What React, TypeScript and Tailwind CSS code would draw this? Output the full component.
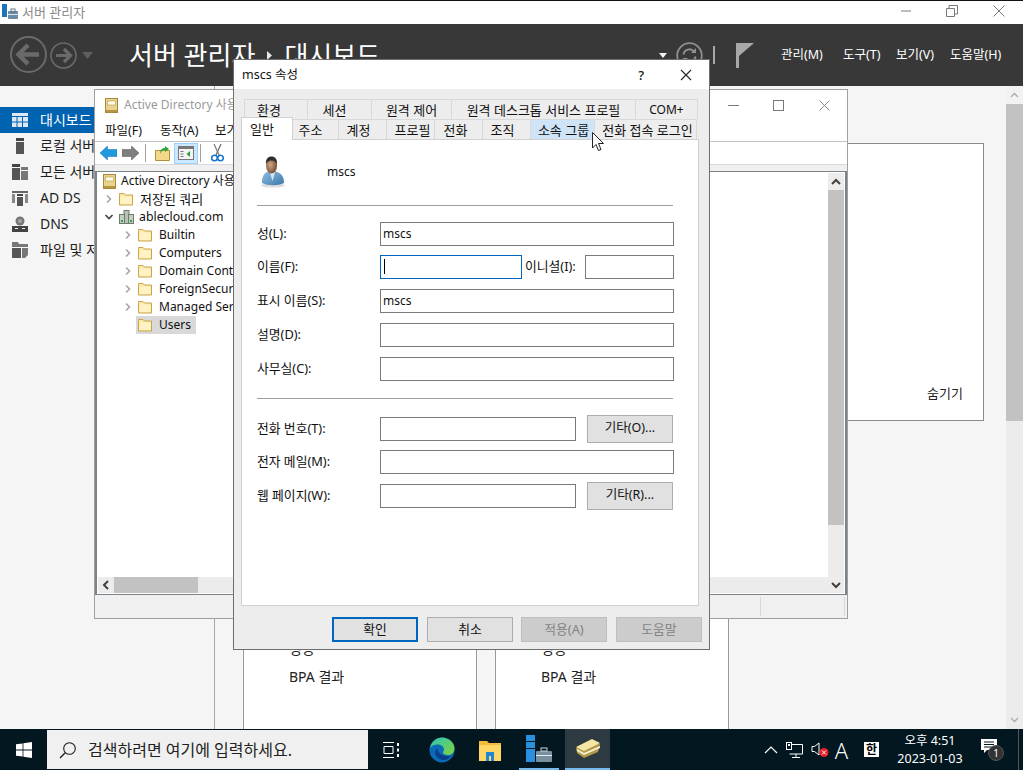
import React from "react";

const Folder = ({ x = 14, cls = "" }: { x?: number; cls?: string }) => (
  <svg width={x} height={14} viewBox="0 0 14 14" className={"shrink-0 " + cls}>
    <path d="M0.5 3.5V1.5h4.5l1.5 1.5h7v10h-13z" fill="#fbe9a8" stroke="#c9a44a" />
    <path d="M1.5 4.5h11v7.5h-11z" fill="#fff2c4" />
  </svg>
);

const Chev = ({ open = false }: { open?: boolean }) => (
  <svg width="10" height="10" viewBox="0 0 10 10" className="shrink-0">
    {open ? (
      <path d="M1.5 3l3.5 3.5L8.5 3" fill="none" stroke="#404040" strokeWidth="1.6" />
    ) : (
      <path d="M3 1.5L6.5 5 3 8.5" fill="none" stroke="#a6a6a6" strokeWidth="1.6" />
    )}
  </svg>
);

const BookIcon = () => (
  <svg width="13" height="15" viewBox="0 0 13 15" className="shrink-0">
    <rect x="0.5" y="0.5" width="12" height="14" fill="#e8d48e" stroke="#a8883e" />
    <rect x="2.5" y="3" width="8" height="4" fill="#fffbe6" stroke="#b79a50" strokeWidth="0.6" />
    <rect x="1" y="12" width="11" height="2" fill="#b9953f" />
  </svg>
);

const TreeRow = ({
  pl,
  children,
  chev,
  open,
}: {
  pl: string;
  children: React.ReactNode;
  chev?: boolean;
  open?: boolean;
}) => (
  <div className={"flex h-[18px] items-center whitespace-nowrap text-[12px] leading-[18px] text-[#111] " + pl}>
    <span className="flex w-[14px] shrink-0 items-center">{chev ? <Chev open={open} /> : null}</span>
    {children}
  </div>
);

const Tab = ({ w, label, cls = "", size = "text-[13px]" }: { w: string; label: string; cls?: string; size?: string }) => (
  <div
    className={
      "flex h-[20px] items-center justify-center border-t border-r border-[#d9d9d9] leading-[18px] whitespace-nowrap text-[#111] " +
      size +
      " " +
      w +
      " " +
      cls
    }
  >
    {label}
  </div>
);

const Input = ({ w, value, focus }: { w: string; value?: string; focus?: boolean }) => (
  <div
    className={
      "flex h-[24px] items-center bg-white pb-px pl-[2px] text-[12px] leading-[18px] text-[#111] border " +
      (focus ? "border-[#0067c0] " : "border-[#7a7a7a] ") +
      w
    }
  >
    {focus ? <span className="ml-px h-[15px] w-px bg-black" /> : value}
  </div>
);

const Label = ({ text, w = "w-[123px]" }: { text: string; w?: string }) => (
  <div className={"shrink-0 whitespace-nowrap pb-[2px] text-[12.8px] leading-[18px] text-[#111] " + w}>{text}</div>
);

const FormRow = ({ label, value, cls = "" }: { label: string; value?: string; cls?: string }) => (
  <div className={"flex h-[24px] items-center " + cls}>
    <Label text={label} />
    <Input w="w-[294px]" value={value} />
  </div>
);

const SmallBtn = ({ text }: { text: string }) => (
  <div className="ml-[11px] flex h-[28px] w-[86px] shrink-0 items-center justify-center border border-[#adadad] bg-[#e1e1e1] pb-[2px] text-[12.5px] leading-[18px] text-[#111]">
    {text}
  </div>
);

const DlgBtn = ({ text, cls }: { text: string; cls: string }) => (
  <div className={"flex h-[25px] w-[86px] items-center justify-center border pb-px text-[12.8px] leading-[18px] " + cls}>{text}</div>
);

const SideRow = ({ icon, text, active }: { icon: React.ReactNode; text: string; active?: boolean }) => (
  <div
    className={
      "flex h-[26px] items-center whitespace-nowrap text-[14px] leading-[20px] " +
      (active ? "bg-[#0063b1] text-white" : "text-[#1f1f1f]")
    }
  >
    <span className="flex w-[40px] shrink-0 justify-center pl-[3px] pr-[4px]">{icon}</span>
    {text}
  </div>
);

const CardBottom = () => (
  <div className="flex h-[269px] w-[234px] flex-col justify-end border-x border-[#9a9a9a] bg-white pb-[44px] pl-[45px] text-[14px] leading-[18px] text-[#222]">
    <div className="mb-[10px]">성능</div>
    <div>BPA 결과</div>
  </div>
);

const TreeScrollArrow = ({ d }: { d: string }) => (
  <svg width="10" height="8" viewBox="0 0 10 8">
    <path d={d} fill="none" stroke="#404040" strokeWidth="2" />
  </svg>
);

export default function App() {
  return (
    <div className="relative flex h-[770px] w-[1023px] flex-col overflow-hidden bg-[#f5f5f5] font-['Noto_Sans','Noto_Sans_CJK_KR',sans-serif]">
      {/* outer title */}
      <div className="h-px bg-[#111]" />
      <div className="flex h-[23px] items-center bg-white pb-[2px]">
        <svg width="16" height="16" viewBox="0 0 16 16" className="ml-[2px]">
          <rect x="0" y="0" width="5" height="13" fill="#1b75bb" />
          <rect x="6" y="7" width="10" height="8" rx="1" fill="#6d8ba3" />
          <rect x="9" y="5" width="4" height="3" fill="none" stroke="#5d7488" />
          <rect x="6" y="10" width="10" height="1" fill="#dfe8ee" />
        </svg>
        <span className="ml-[4px] text-[13px] leading-[18px] text-[#8a8a8a]">서버 관리자</span>
        <div className="ml-auto flex items-center pb-[1px]">
          <svg width="12" height="12" viewBox="0 0 12 12" className="mr-[34px]">
            <path d="M1 6h10" stroke="#7a7a7a" />
          </svg>
          <svg width="12" height="12" viewBox="0 0 12 12" className="mr-[35px]">
            <path d="M0.5 3.5h8v8h-8zM3 3V0.5h8.5V9H9" fill="none" stroke="#7a7a7a" />
          </svg>
          <svg width="12" height="12" viewBox="0 0 12 12" className="mr-[18px]">
            <path d="M0.5 0.5l11 11M11.5 0.5l-11 11" stroke="#7a7a7a" />
          </svg>
        </div>
      </div>

      {/* dark header */}
      <div className="flex h-[62px] items-center bg-[#383838]">
        <svg width="38" height="38" viewBox="0 0 38 38" className="ml-[10px]">
          <circle cx="18.5" cy="18.5" r="17.5" fill="none" stroke="#6a6a6a" strokeWidth="2" />
          <path d="M8 18.5h21M18 9l-9.5 9.5L18 28" fill="none" stroke="#6a6a6a" strokeWidth="4.5" />
        </svg>
        <svg width="27" height="27" viewBox="0 0 27 27" className="ml-[2px]">
          <circle cx="13.5" cy="13.5" r="12.5" fill="none" stroke="#6a6a6a" strokeWidth="1.6" />
          <path d="M6 13.5h14M14 7l6.5 6.5L14 20" fill="none" stroke="#6a6a6a" strokeWidth="3.2" />
        </svg>
        <svg width="11" height="7" viewBox="0 0 11 7" className="ml-[5px]">
          <path d="M0 0h11L5.5 7z" fill="#5e5e5e" />
        </svg>
        <div className="ml-[36px] flex items-center whitespace-nowrap text-[26px] leading-[32px] text-white">
          <span>서버 관리자</span>
          <svg width="5" height="9" viewBox="0 0 5 9" className="mx-[12px]">
            <path d="M0 0l5 4.5L0 9z" fill="#e8e8e8" />
          </svg>
          <span>대시보드</span>
        </div>
        <svg width="8" height="5" viewBox="0 0 8 5" className="ml-auto">
          <path d="M0 0h8L4 5z" fill="#f2f2f2" />
        </svg>
        <svg width="27" height="27" viewBox="0 0 27 27" className="ml-[9px]">
          <circle cx="13.5" cy="13.5" r="12.3" fill="none" stroke="#909090" strokeWidth="1.8" />
          <path d="M7.5 12.5a6 6 0 0 1 10.5-3M19.500 14.500a6 6 0 0 1-10.500 3" fill="none" stroke="#909090" strokeWidth="2" />
          <path d="M20 6v5h-5zM7 21v-5h5z" fill="#909090" />
        </svg>
        <div className="ml-[10px] h-[18px] w-[2px] bg-[#a8a8a8]" />
        <svg width="18" height="25" viewBox="0 0 18 25" className="ml-[21px]">
          <rect x="0" y="0" width="3" height="25" fill="#a8a8a8" />
          <path d="M3 0h15L3 13z" fill="#a8a8a8" />
        </svg>
        <div className="flex items-center whitespace-nowrap text-[12.5px] leading-[18px] text-white">
          <span className="ml-[27px] w-[62px]">관리(M)</span>
          <span className="w-[53px]">도구(T)</span>
          <span className="w-[54px]">보기(V)</span>
          <span className="mr-[21px] w-[52px]">도움말(H)</span>
        </div>
      </div>

      {/* body */}
      <div className="flex min-h-0 flex-1">
        <aside className="w-[215px] shrink-0 border-r border-[#a6a6a6] bg-[#f5f5f5] pt-[21px]">
          <SideRow
            active
            text="대시보드"
            icon={
              <svg width="16" height="14" viewBox="0 0 16 14">
                <rect width="16" height="3" fill="#dce9f5" />
                <rect y="4" width="4.5" height="4.5" fill="#dce9f5" />
                <rect x="5.5" y="4" width="4.5" height="4.5" fill="#dce9f5" />
                <rect x="11" y="4" width="5" height="4.5" fill="#dce9f5" />
                <rect y="9.5" width="4.5" height="4.5" fill="#dce9f5" />
                <rect x="5.5" y="9.5" width="4.5" height="4.5" fill="#dce9f5" />
                <rect x="11" y="9.5" width="5" height="4.5" fill="#dce9f5" />
              </svg>
            }
          />
          <SideRow
            text="로컬 서버"
            icon={
              <svg width="8" height="16" viewBox="0 0 8 16">
                <rect width="8" height="3" fill="#444" />
                <rect y="4" width="8" height="12" fill="#555" />
              </svg>
            }
          />
          <SideRow
            text="모든 서버"
            icon={
              <svg width="16" height="16" viewBox="0 0 16 16">
                <rect width="8" height="3" fill="#444" />
                <rect y="4" width="8" height="12" fill="#555" />
                <rect x="9" y="3" width="7" height="3" fill="#777" />
                <rect x="9" y="7" width="7" height="9" fill="#777" />
              </svg>
            }
          />
          <SideRow
            text="AD DS"
            icon={
              <svg width="16" height="16" viewBox="0 0 16 16">
                <rect x="0" y="1" width="16" height="2" fill="#666" />
                <rect x="0" y="4" width="3" height="9" fill="#888" />
                <rect x="13" y="4" width="3" height="9" fill="#888" />
                <rect x="5" y="4" width="6" height="2" fill="#444" />
                <rect x="5" y="7" width="6" height="9" fill="#555" />
              </svg>
            }
          />
          <SideRow
            text="DNS"
            icon={
              <svg width="16" height="16" viewBox="0 0 16 16">
                <circle cx="8" cy="5" r="4.5" fill="#777" />
                <circle cx="8" cy="5" r="2" fill="#a5a5a5" />
                <rect x="0" y="10" width="16" height="6" fill="#444" />
                <rect x="3" y="12" width="3" height="1" fill="#eee" />
                <rect x="10" y="12" width="3" height="1" fill="#eee" />
              </svg>
            }
          />
          <SideRow
            text="파일 및 저장소"
            icon={
              <svg width="16" height="16" viewBox="0 0 16 16">
                <path d="M0 0h6l1 2h9v3H0z" fill="#777" />
                <rect x="0" y="6" width="9" height="10" fill="#555" />
                <path d="M10 6h6v7l-3 3h-3z" fill="#777" />
              </svg>
            }
          />
        </aside>

        <main className="min-w-0 flex-1 pl-[28px] pr-[22px] pt-[57px]">
          <div className="flex h-[278px] items-end justify-end border border-[#8c8c8c] bg-white pb-[18px] pr-[20px] text-[13px] leading-[18px] text-[#222]">
            숨기기
          </div>
          <div className="mt-[40px] flex gap-[18px]">
            <CardBottom />
            <CardBottom />
          </div>
        </main>

        <div className="flex w-[17px] shrink-0 flex-col bg-[#ececec]">
          <div className="flex h-[18px] items-center justify-center bg-[#f2f2f2]">
            <svg width="9" height="6" viewBox="0 0 9 6">
              <path d="M1 5l3.5-3.5L8 5" fill="none" stroke="#ababab" strokeWidth="1.3" />
            </svg>
          </div>
          <div className="h-[317px] bg-[#c2c2c2]" />
          <div className="mt-auto flex h-[18px] items-center justify-center">
            <svg width="9" height="6" viewBox="0 0 9 6">
              <path d="M1 1l3.5 3.5L8 1" fill="none" stroke="#ababab" strokeWidth="1.3" />
            </svg>
          </div>
        </div>
      </div>

      {/* taskbar */}
      <div className="flex h-[41px] shrink-0 items-stretch bg-[#02171f] text-white">
        <div className="flex w-[47px] items-center justify-center">
          <svg width="16" height="16" viewBox="0 0 16 16">
            <path d="M0 2.3l6.6-.9v6.2H0zM7.4 1.3L16 0v7.6H7.4zM0 8.4h6.6v6.2L0 13.7zM7.4 8.4H16V16l-8.6-1.3z" fill="#fff" />
          </svg>
        </div>
        <div className="my-px flex w-[321px] items-center bg-[#f0f0f0] text-[16px] leading-[20px] text-[#222]">
          <svg width="18" height="18" viewBox="0 0 18 18" className="ml-[12px]">
            <circle cx="10.5" cy="7.5" r="5.8" fill="none" stroke="#1c1c1c" strokeWidth="1.1" />
            <path d="M6.2 11.8L1 17" stroke="#1c1c1c" strokeWidth="1.3" />
          </svg>
          <span className="ml-[11px] whitespace-nowrap">검색하려면 여기에 입력하세요.</span>
        </div>
        <div className="flex w-[46px] items-center justify-center">
          <svg width="16" height="16" viewBox="0 0 16 16">
            <path d="M0 .5h11M0 15.5h11M1 4.5h9v7H1z" fill="none" stroke="#fff" />
            <rect x="14" y="1" width="2" height="3" fill="#fff" />
            <rect x="14" y="6.5" width="2" height="3" fill="#fff" />
            <rect x="14" y="12" width="2" height="3" fill="#fff" />
          </svg>
        </div>
        <div className="flex w-[55px] items-center justify-center">
          <svg width="26" height="26" viewBox="0 0 26 26">
            <defs>
              <linearGradient id="e1" x1="0" y1="0" x2="1" y2="1">
                <stop offset="0" stopColor="#2fc5b3" />
                <stop offset="1" stopColor="#7fd33f" />
              </linearGradient>
            </defs>
            <circle cx="13" cy="13" r="12.5" fill="#0c6bb8" />
            <path d="M1 11C2.5 4 8 .5 13 .5c7 0 12.5 5 12.5 11 0 4-3 6.5-6.5 6.5-3 0-5-1-5-2.5 0-1 1-1.5 1-3C15 9 11 7 7.5 7.5 4.5 8 2 9 1 11z" fill="url(#e1)" />
            <path d="M9 21c-3-2-4-7-1-10 1 6 6 9 14 8-3 5-9 5-13 2z" fill="#0a3f87" />
          </svg>
        </div>
        <div className="flex w-[42px] items-center justify-center">
          <svg width="22" height="22" viewBox="0 0 22 22">
            <path d="M0 2h8l2 2h12v18H0z" fill="#f2bb3a" />
            <path d="M0 6h22v16H0z" fill="#ffd766" />
            <path d="M7 13h8v9H7z" fill="#1f86d1" />
            <path d="M10 17h2v5h-2z" fill="#ffd766" />
          </svg>
        </div>
        <div className="ml-[8px] flex w-[40px] items-center justify-center border-b-2 border-[#76b9ed]">
          <svg width="26" height="28" viewBox="0 0 26 28">
            <rect x="0" y="0" width="9" height="6" fill="#2a8fdc" />
            <rect x="0" y="7" width="9" height="6" fill="#2a8fdc" />
            <rect x="0" y="14" width="9" height="13" fill="#2a8fdc" />
            <rect x="10" y="16" width="16" height="11" rx="1" fill="#79909f" />
            <rect x="15" y="13" width="6" height="3" fill="none" stroke="#c8d3da" />
            <rect x="10" y="20" width="16" height="1" fill="#e6edf2" />
          </svg>
        </div>
        <div className="ml-[6px] flex w-[45px] items-center justify-center border-b-2 border-[#76b9ed] bg-[#2d3a42]">
          <svg width="24" height="19" viewBox="0 0 24 19">
            <path d="M0 9L16 1l8 4-2 8-14 6-7-5z" fill="#b29a4a" />
            <path d="M0 8L16 0l8 4-16 8z" fill="#f4e7a4" />
            <path d="M1 10l7 4 16-7v2L8 16l-7-4z" fill="#f8f3d4" />
          </svg>
        </div>
        <div className="ml-auto flex items-center">
          <svg width="14" height="8" viewBox="0 0 14 8" className="mr-[8px]">
            <path d="M1 7l6-6 6 6" fill="none" stroke="#fff" strokeWidth="1.2" />
          </svg>
          <svg width="17" height="16" viewBox="0 0 17 16" className="mr-[8px]">
            <path d="M3.5 2.5h13V12h-13M10 12v3M6 15.5h8" fill="none" stroke="#fff" />
            <rect x="0.5" y="0.5" width="5" height="7" fill="#02171f" stroke="#fff" />
            <rect x="2" y="2" width="2" height="2" fill="#fff" />
          </svg>
          <svg width="19" height="17" viewBox="0 0 19 17" className="mr-[4px]">
            <path d="M1 5.5h2.5L8 2v12L3.5 10.5H1z" fill="none" stroke="#fff" />
            <circle cx="13" cy="11.5" r="4.5" fill="#e8202a" />
            <path d="M11 9.5l4 4M15 9.5l-4 4" stroke="#fff" />
          </svg>
          <span className="w-[15px] text-center text-[22px] leading-[24px] font-light">A</span>
          <span className="ml-[15px] flex h-[15px] w-[15px] items-center justify-center bg-white text-[12px] leading-[15px] font-bold text-black">
            한
          </span>
          <div className="ml-[7px] flex w-[88px] flex-col items-center text-[12.5px] leading-[18px]">
            <span>오후 4:51</span>
            <span>2023-01-03</span>
          </div>
          <div className="relative ml-[7px] mr-[13px] h-[28px] w-[24px]">
            <svg width="18" height="16" viewBox="0 0 18 16" className="absolute left-0 top-[3px]">
              <path d="M0 0h16v11H6l-3 3v-3H0z" fill="#fff" />
              <path d="M3 3h10M3 5.5h10M3 8h10" stroke="#02171f" />
            </svg>
            <span className="absolute left-[7px] top-[9px] flex h-[16px] w-[16px] items-center justify-center rounded-full border border-[#555] bg-[#333] text-[10px] leading-[14px]">
              1
            </span>
          </div>
        </div>
        <div className="mr-[4px] w-px bg-[#4a5a63]" />
      </div>

      {/* Active Directory window */}
      <div className="absolute left-[94px] top-[89px] flex h-[530px] w-[754px] flex-col border border-[#a0a0a0] bg-white">
        <div className="flex h-[30px] shrink-0 items-center">
          <span className="ml-[10px]"><BookIcon /></span>
          <span className="ml-[6px] whitespace-nowrap text-[12px] leading-[18px] text-[#9a9a9a]">Active Directory 사용</span>
          <svg width="11" height="1" viewBox="0 0 11 1" className="ml-auto mr-[34px]">
            <rect width="11" height="1" fill="#7a7a7a" />
          </svg>
          <svg width="11" height="11" viewBox="0 0 11 11" className="mr-[35px]">
            <rect x="0.5" y="0.5" width="10" height="10" fill="none" stroke="#7a7a7a" />
          </svg>
          <svg width="11" height="11" viewBox="0 0 11 11" className="mr-[17px]">
            <path d="M0.5 0.5l10 10M10.5 0.5l-10 10" stroke="#8a8a8a" />
          </svg>
        </div>
        <div className="flex h-[22px] shrink-0 items-center border-b border-[#c4c4c4] text-[12.5px] leading-[18px] text-[#111]">
          <span className="ml-[10px] w-[55px]">파일(F)</span>
          <span className="w-[55px]">동작(A)</span>
          <span className="whitespace-nowrap">보기</span>
        </div>
        <div className="flex h-[22px] shrink-0 items-center">
          <svg width="17" height="14" viewBox="0 0 17 14" className="ml-[5px]">
            <path d="M0 7l7.5-7v3.5H17v7H7.5V14z" fill="#1f9ae0" stroke="#0f6cb0" strokeWidth="0.5" />
          </svg>
          <svg width="17" height="14" viewBox="0 0 17 14" className="ml-[5px]">
            <path d="M17 7L9.5 0v3.5H0v7h9.5V14z" fill="#7f7f7f" stroke="#555" strokeWidth="0.5" />
          </svg>
          <div className="ml-[6px] h-[18px] w-px bg-[#a0a0a0]" />
          <svg width="15" height="15" viewBox="0 0 15 15" className="ml-[9px]">
            <path d="M0.5 4.5h14v10h-14z" fill="#f5d98a" stroke="#b0923c" />
            <path d="M5 8c0-4 2-6 5-6V0l4 3-4 3V4C8 4 6 5 5 8z" fill="#2ea836" />
          </svg>
          <div className="ml-[4px] flex h-[21px] w-[24px] items-center justify-center border border-[#99d1ff] bg-[#cce8ff]">
            <svg width="16" height="14" viewBox="0 0 16 14">
              <rect x="0.5" y="0.5" width="15" height="13" fill="#f4f4f4" stroke="#777" />
              <rect x="1" y="1" width="14" height="2" fill="#777" />
              <rect x="2.5" y="5" width="3" height="1" fill="#777" />
              <rect x="2.5" y="7.5" width="3" height="1" fill="#777" />
              <rect x="2.5" y="10" width="3" height="1" fill="#777" />
              <path d="M12 5v6L8.5 8z" fill="#27a33a" />
            </svg>
          </div>
          <div className="ml-[2px] h-[18px] w-px bg-[#a0a0a0]" />
          <svg width="13" height="18" viewBox="0 0 13 18" className="ml-[10px]">
            <path d="M10 0L5 11" stroke="#666" strokeWidth="1.2" />
            <path d="M3 0l5 11" stroke="#777" strokeWidth="1.2" />
            <circle cx="3.5" cy="14" r="2.8" fill="none" stroke="#1677cc" strokeWidth="1.6" />
            <circle cx="9.5" cy="14" r="2.8" fill="none" stroke="#1677cc" strokeWidth="1.6" />
          </svg>
        </div>
        <div className="h-[7px] shrink-0 border-t border-[#d9d9d9] bg-[#f0f0f0]" />
        <div className="flex min-h-0 flex-1 border-y border-r-2 border-l-2 border-[#7a828a] bg-white">
          <div className="flex min-w-0 flex-1 flex-col">
            <div className="flex-1">
              <div className="flex h-[18px] items-center whitespace-nowrap pl-[6px] text-[12px] leading-[18px] text-[#111]">
                <BookIcon />
                <span className="ml-[5px]">Active Directory 사용</span>
              </div>
              <TreeRow pl="pl-[7px]" chev>
                <Folder cls="ml-[1px]" />
                <span className="ml-[7px] text-[13px]">저장된 쿼리</span>
              </TreeRow>
              <TreeRow pl="pl-[7px]" chev open>
                <svg width="15" height="14" viewBox="0 0 15 14" className="ml-[1px] shrink-0">
                  <rect x="5" y="0.5" width="5" height="13" fill="#b8c3b8" stroke="#6d7a6d" />
                  <rect x="0.5" y="4.5" width="5" height="9" fill="#c4cfc4" stroke="#6d7a6d" />
                  <rect x="9.5" y="4.5" width="5" height="9" fill="#c4cfc4" stroke="#6d7a6d" />
                  <rect x="2" y="10" width="2" height="2" fill="#2ea836" />
                  <rect x="11" y="10" width="2" height="2" fill="#2ea836" />
                </svg>
                <span className="ml-[5px] text-[12.3px]">ablecloud.com</span>
              </TreeRow>
              {["Builtin", "Computers", "Domain Cont", "ForeignSecur", "Managed Ser"].map((t) => (
                <TreeRow key={t} pl="pl-[26px]" chev>
                  <Folder cls="ml-[1px]" />
                  <span className="ml-[7px]">{t}</span>
                </TreeRow>
              ))}
              <div className="ml-[39px] flex h-[18px] w-[60px] items-center bg-[#d9d9d9] pl-[2px] text-[12px] leading-[18px] text-[#111]">
                <Folder />
                <span className="ml-[7px]">Users</span>
              </div>
            </div>
            <div className="mb-px ml-px flex h-[16px] shrink-0 items-stretch bg-[#ececec]">
              <div className="flex w-[16px] items-center justify-center">
                <svg width="8" height="10" viewBox="0 0 8 10">
                  <path d="M6 1L2 5l4 4" fill="none" stroke="#404040" strokeWidth="2" />
                </svg>
              </div>
              <div className="w-[84px] bg-[#c2c2c2]" />
            </div>
          </div>
          <div className="my-px mr-px flex w-[16px] shrink-0 flex-col bg-[#ececec]">
            <div className="flex h-[17px] items-center justify-center">
              <TreeScrollArrow d="M1 6l4-4 4 4" />
            </div>
            <div className="h-[335px] bg-[#c2c2c2]" />
            <div className="mt-auto flex h-[17px] items-center justify-center">
              <TreeScrollArrow d="M1 2l4 4 4-4" />
            </div>
          </div>
        </div>
        <div className="flex h-[23px] shrink-0 items-stretch justify-end bg-[#f0f0f0] py-[2px] pr-[2px]">
          <div className="w-[85px] border-x border-[#d9d9d9]" />
        </div>
      </div>

      {/* Properties dialog */}
      <div className="absolute left-[233px] top-[59px] flex h-[591px] w-[477px] flex-col border border-[#6e6e6e] bg-[#ededed]">
        <div className="flex h-[29px] shrink-0 items-center bg-white text-[12.5px] leading-[18px] text-[#111]">
          <span className="ml-[8px]">mscs 속성</span>
          <span className="ml-auto mr-[36px] text-[13px] font-medium">?</span>
          <svg width="12" height="12" viewBox="0 0 12 12" className="mr-[17px]">
            <path d="M1 1l10 10M11 1L1 11" stroke="#222" strokeWidth="1.1" />
          </svg>
        </div>
        <div className="ml-[10px] mt-[10px] flex border-l border-[#d9d9d9]">
          <Tab w="w-[63px]" label="환경" cls="pr-[14px]" />
          <Tab w="w-[64px]" label="세션" cls="pr-[10px]" />
          <Tab w="w-[80px]" label="원격 제어" />
          <Tab w="w-[184px]" label="원격 데스크톱 서비스 프로필" />
          <Tab w="w-[62px]" label="COM+" size="text-[12px]" />
        </div>
        <div className="relative ml-[7px] flex h-[20px]">
          <div className="z-10 -mt-[2px] flex h-[23px] w-[52px] items-center border-x border-t border-[#d0d0d0] bg-white pl-[8px] text-[13px] leading-[18px] text-[#111]">
            일반
          </div>
          <Tab w="w-[46px]" label="주소" cls="pr-[10px]" />
          <Tab w="w-[48px]" label="계정" cls="pr-[8px]" />
          <Tab w="w-[48px]" label="프로필" cls="pl-[4px]" />
          <Tab w="w-[48px]" label="전화" cls="pr-[6px]" />
          <Tab w="w-[48px]" label="조직" cls="pr-[8px]" />
          <Tab w="w-[64px]" label="소속 그룹" cls="bg-[#cfe4f7] pl-[2px]" />
          <Tab w="w-[102px]" label="전화 접속 로그인" cls="pl-[4px]" />
        </div>
        <div className="ml-[7px] h-[467px] w-[458px] border border-[#d0d0d0] bg-white pl-[15px]">
          <div className="box-content flex h-[32px] items-center pt-[16px]">
            <svg width="30" height="32" viewBox="0 0 30 32" className="ml-[1px] shrink-0">
              <defs>
                <radialGradient id="fc" cx="0.4" cy="0.45" r="0.65">
                  <stop offset="0" stopColor="#d3a785" />
                  <stop offset="1" stopColor="#6f452d" />
                </radialGradient>
                <linearGradient id="sh" x1="0" y1="0" x2="1" y2="1">
                  <stop offset="0" stopColor="#8fbfe2" />
                  <stop offset="1" stopColor="#3c78aa" />
                </linearGradient>
              </defs>
              <ellipse cx="15" cy="29.5" rx="12" ry="2" fill="#dcdcdc" />
              <path d="M4 27c0-5 1-9 5-11l3-1 2 6 3-6 4 2c4 2 5 6 5 10-6 3-16 3-22 0z" fill="url(#sh)" />
              <path d="M11.500 15l3 10 3-10-3 3z" fill="#d5e6f3" />
              <ellipse cx="13.500" cy="9.500" rx="5.500" ry="8" fill="url(#fc)" />
              <path d="M8 8C7.500 3 10 0.500 13.500 0.500S19.500 3 19 8.500C18 5.500 16 4.500 13.500 4.500 11 4.500 9 6 8 8z" fill="#2f2e2c" />
            </svg>
            <span className="ml-[39px] text-[12px] leading-[18px] text-[#111]">mscs</span>
          </div>
          <div className="mt-[17px] h-px w-[416px] bg-[#a0a0a0]" />
          <FormRow cls="mt-[16px]" label="성(L):" value="mscs" />
          <div className="mt-[9px] flex h-[24px] items-center">
            <Label text="이름(F):" />
            <Input w="w-[142px]" focus />
            <Label text="이니셜(I):" w="w-[63px] pl-[3px]" />
            <Input w="w-[89px]" />
          </div>
          <FormRow cls="mt-[10px]" label="표시 이름(S):" value="mscs" />
          <FormRow cls="mt-[10px]" label="설명(D):" />
          <FormRow cls="mt-[10px]" label="사무실(C):" />
          <div className="mt-[17px] h-px w-[416px] bg-[#a0a0a0]" />
          <div className="mt-[18px] flex h-[24px] items-center">
            <Label text="전화 번호(T):" />
            <Input w="w-[196px]" />
            <SmallBtn text="기타(O)..." />
          </div>
          <FormRow cls="mt-[9px]" label="전자 메일(M):" />
          <div className="mt-[10px] flex h-[24px] items-center">
            <Label text="웹 페이지(W):" />
            <Input w="w-[196px]" />
            <SmallBtn text="기타(R)..." />
          </div>
        </div>
        <div className="ml-[98px] mt-[11px] flex">
          <DlgBtn text="확인" cls="border-2 border-[#0067c0] bg-[#e1e1e1] text-[#111]" />
          <DlgBtn text="취소" cls="ml-[9px] border-[#adadad] bg-[#e1e1e1] text-[#111]" />
          <DlgBtn text="적용(A)" cls="ml-[8px] border-[#bfbfbf] bg-[#cccccc] text-[#838383]" />
          <DlgBtn text="도움말" cls="ml-[9px] border-[#bfbfbf] bg-[#cccccc] text-[#838383]" />
        </div>
      </div>

      {/* mouse pointer */}
      <svg width="14" height="20" viewBox="0 0 14 20" className="absolute left-[592px] top-[132px]">
        <path d="M0.5 0.5v15.5l3.5-3.5 2.5 6 2.5-1-2.5-6h5z" fill="#fff" stroke="#222" />
      </svg>
    </div>
  );
}
